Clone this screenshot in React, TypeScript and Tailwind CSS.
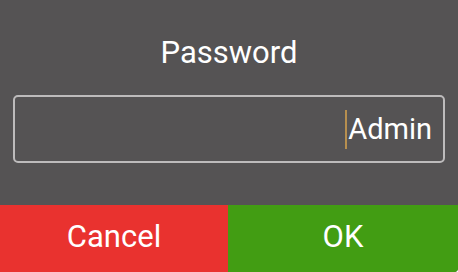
export default function App() {
  return (
    <div className="w-[458px] h-[272px] bg-[#555354] flex flex-col overflow-hidden rounded-br-[4px]" style={{ fontFamily: 'Roboto, "Noto Sans", sans-serif' }}>
      <div className="flex-1 flex flex-col px-[13px]">
        <div className="h-[95px] flex items-center justify-center pt-[10px]">
          <span className="text-white text-[31px] leading-none">Password</span>
        </div>
        <div className="h-[68px] border-2 border-[#bdbbbc] rounded-[5px] flex items-center justify-end pr-[11px]">
          <span className="w-[2px] h-[39px] bg-[#b78f4f] mr-[1px]" />
          <span className="text-white text-[29px] leading-none">Admin</span>
        </div>
      </div>
      <div className="h-[67px] flex">
        <button className="w-[228px] bg-[#e9322f] text-white text-[31px] flex items-center justify-center pb-[2px]">Cancel</button>
        <button className="flex-1 bg-[#429d13] text-white text-[31px] flex items-center justify-center pb-[2px]">OK</button>
      </div>
    </div>
  );
}
